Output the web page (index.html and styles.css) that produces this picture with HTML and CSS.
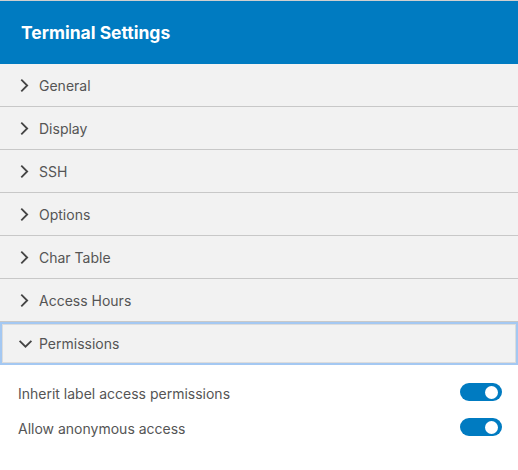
FILE: index.html
```html
<!DOCTYPE html>
<html>
<head>
<meta charset="utf-8">
<link rel="stylesheet" href="styles.css">
</head>
<body>
<div class="panel">
  <div class="header">Terminal Settings</div>
  <div class="row"><svg class="chev" viewBox="0 0 10 14"><path d="M2 1.5 L7.5 7 L2 12.5"/></svg><span>General</span></div>
  <div class="row"><svg class="chev" viewBox="0 0 10 14"><path d="M2 1.5 L7.5 7 L2 12.5"/></svg><span>Display</span></div>
  <div class="row"><svg class="chev" viewBox="0 0 10 14"><path d="M2 1.5 L7.5 7 L2 12.5"/></svg><span>SSH</span></div>
  <div class="row"><svg class="chev" viewBox="0 0 10 14"><path d="M2 1.5 L7.5 7 L2 12.5"/></svg><span>Options</span></div>
  <div class="row"><svg class="chev" viewBox="0 0 10 14"><path d="M2 1.5 L7.5 7 L2 12.5"/></svg><span>Char Table</span></div>
  <div class="row"><svg class="chev" viewBox="0 0 10 14"><path d="M2 1.5 L7.5 7 L2 12.5"/></svg><span>Access Hours</span></div>
  <div class="row open"><svg class="chev down" viewBox="0 0 14 10"><path d="M1.5 2.5 L7 8 L12.5 2.5"/></svg><span>Permissions</span></div>
  <div class="content">
    <div class="setting"><span>Inherit label access permissions</span><span class="toggle"><span class="knob"></span></span></div>
    <div class="setting"><span>Allow anonymous access</span><span class="toggle"><span class="knob"></span></span></div>
  </div>
</div>
</body>
</html>
```

FILE: styles.css
```css
html, body {
  margin: 0;
  padding: 0;
  background: #ffffff;
}
body {
  font-family: Inter, "Noto Sans", sans-serif;
  width: 518px;
}
.panel {
  border-top: 1px solid #cfcfcf;
}
.header {
  height: 63px;
  background: #007bc1;
  color: #ffffff;
  font-weight: 700;
  font-size: 17.5px;
  display: flex;
  align-items: center;
  padding-left: 21px;
  box-sizing: border-box;
  padding-bottom: 1px;
}
.row {
  height: 43px;
  box-sizing: border-box;
  background: #f2f2f2;
  border-bottom: 1px solid #c8c8c8;
  display: flex;
  align-items: center;
  padding-left: 19px;
  font-size: 14px;
  color: #555555;
}
.row span {
  margin-left: 9px;
}
.chev {
  width: 11px;
  height: 15px;
  fill: none;
  stroke: #444444;
  stroke-width: 1.7;
}
.chev.down {
  width: 15px;
  height: 11px;
}
.row.open {
  border: 2px solid #a4c8f2;
  box-shadow: inset 0 0 0 1px #dcdcdc;
  height: 43px;
  padding-left: 16px;
}
.row.open span {
  margin-left: 6px;
}
.content {
  padding: 11px 16px 0 18px;
}
.setting {
  display: flex;
  justify-content: space-between;
  align-items: center;
  height: 35px;
  font-size: 14px;
  color: #555555;
}
.toggle {
  width: 42px;
  height: 18px;
  border-radius: 9px;
  background: #007bc1;
  display: flex;
  align-items: center;
  justify-content: flex-end;
  padding-right: 4px;
  box-sizing: border-box;
  margin-top: -3px;
}
.knob {
  width: 13px;
  height: 13px;
  border-radius: 50%;
  background: #ffffff;
}
```
